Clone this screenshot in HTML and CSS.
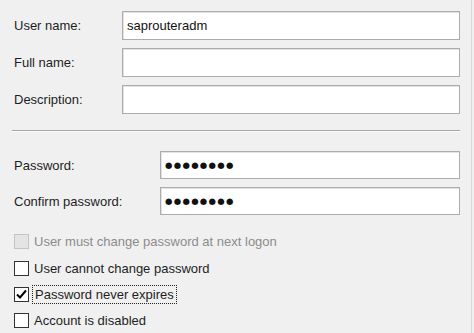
FILE: index.html
```html
<!DOCTYPE html>
<html>
<head>
<meta charset="utf-8">
<link rel="stylesheet" href="styles.css">
</head>
<body>
<div class="panel">
  <div class="grid top">
    <label class="lbl">User name:</label>
    <div class="field">saprouteradm</div>
    <label class="lbl">Full name:</label>
    <div class="field"></div>
    <label class="lbl">Description:</label>
    <div class="field"></div>
  </div>
  <div class="sep"></div>
  <div class="grid pw">
    <label class="lbl">Password:</label>
    <div class="field dots">●●●●●●●●</div>
    <label class="lbl">Confirm password:</label>
    <div class="field dots">●●●●●●●●</div>
  </div>
  <div class="checks">
    <div class="row disabled"><span class="box"></span><span class="txt">User must change password at next logon</span></div>
    <div class="row"><span class="box"></span><span class="txt">User cannot change password</span></div>
    <div class="row"><span class="box"><svg width="13" height="13" viewBox="0 0 13 13"><path d="M2 6.5 L5 9.5 L11 2.5" fill="none" stroke="#000" stroke-width="2"/></svg></span><span class="txt focus">Password never expires</span></div>
    <div class="row"><span class="box"></span><span class="txt">Account is disabled</span></div>
  </div>
</div>
</body>
</html>
```
FILE: styles.css
```css
html, body {
  margin: 0;
  padding: 0;
}
body {
  background: #f0f0f0;
  font-family: "Liberation Sans", Arial, sans-serif;
  font-size: 13px;
  color: #1e1e1e;
}
.panel {
  width: 472px;
  height: 333px;
  box-sizing: border-box;
  border-right: 1px solid #d9d9d9;
  padding: 11px 11px 0 14px;
}
.grid {
  display: grid;
  row-gap: 8px;
  align-items: center;
}
.top {
  grid-template-columns: 108px 1fr;
}
.top .field {
  height: 29px;
}
.pw {
  grid-template-columns: 146px 1fr;
}
.pw .field {
  height: 28px;
}
.field {
  box-sizing: border-box;
  background: #fff;
  border: 1px solid #acacac;
  box-shadow: inset 1px 1px 0 #e3e3e3;
  padding: 0 4px;
  display: flex;
  align-items: center;
  color: #111;
}
.dots {
  font-family: "DejaVu Sans", sans-serif;
  font-size: 8.5px;
  letter-spacing: 1.3px;
  padding-left: 4px;
}
.sep {
  height: 1px;
  background: #a6a6a6;
  border-bottom: 1px solid #fbfbfb;
  margin: 16px 0 19px -2px;
}
.checks {
  display: flex;
  flex-direction: column;
  margin-top: 13px;
}
.row {
  height: 27px;
  display: flex;
  align-items: center;
  gap: 5px;
}
.row:nth-child(3) {
  height: 25px;
}
.box {
  box-sizing: border-box;
  width: 15px;
  height: 15px;
  border: 1px solid #333;
  background: #fff;
  display: flex;
  align-items: center;
  justify-content: center;
}
.disabled .box {
  border-color: #c4c4c4;
  background: #e4e4e4;
}
.disabled .txt {
  color: #8c8c8c;
}
.focus {
  outline: 1px dotted #222;
  outline-offset: 1px;
  padding: 0 1px;
}
```
